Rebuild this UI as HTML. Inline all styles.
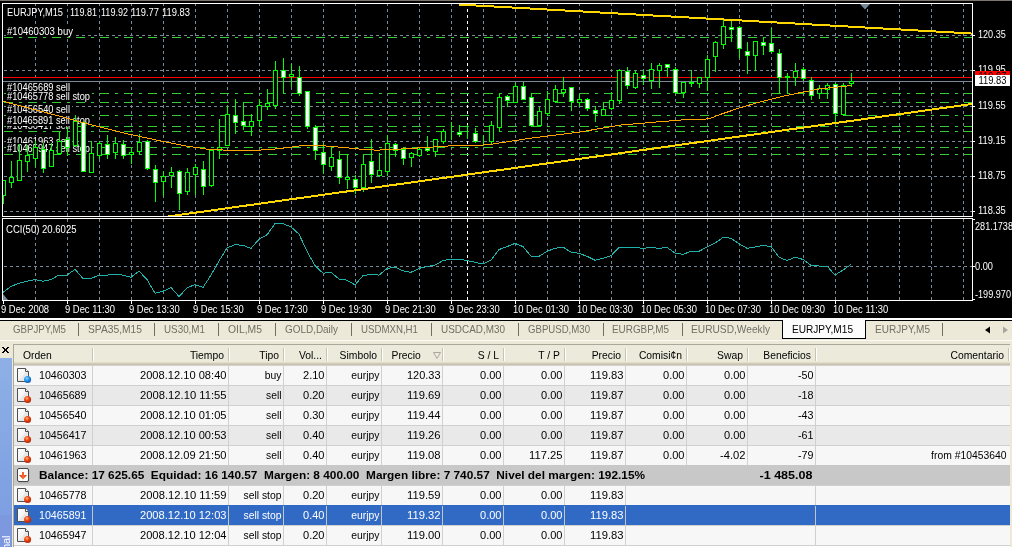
<!DOCTYPE html><html><head><meta charset="utf-8"><style>html,body{margin:0;padding:0;background:#000;overflow:hidden}</style></head><body><svg width="1012" height="547" viewBox="0 0 1012 547" style="display:block;will-change:transform;font-family:'Liberation Sans', sans-serif"><defs><clipPath id="cm"><rect x="3" y="4" width="969" height="212"/></clipPath><clipPath id="cc"><rect x="3" y="219" width="969" height="81"/></clipPath></defs><rect x="0" y="0" width="1012" height="321" fill="#000"/><rect x="0" y="0" width="1012" height="1" fill="#7d756b"/><rect x="0" y="318" width="1012" height="2" fill="#fff"/><g shape-rendering="crispEdges"><path d="M4 35.5H972" stroke="#778899" stroke-dasharray="3 3"/><path d="M4 70.5H972" stroke="#778899" stroke-dasharray="3 3"/><path d="M4 106.5H972" stroke="#778899" stroke-dasharray="3 3"/><path d="M4 141.5H972" stroke="#778899" stroke-dasharray="3 3"/><path d="M4 176.5H972" stroke="#778899" stroke-dasharray="3 3"/><path d="M4 211.5H972" stroke="#778899" stroke-dasharray="3 3"/><path d="M35.5 3V216" stroke="#778899" stroke-dasharray="3 3"/><path d="M67.5 3V216" stroke="#778899" stroke-dasharray="3 3"/><path d="M99.5 3V216" stroke="#778899" stroke-dasharray="3 3"/><path d="M131.5 3V216" stroke="#778899" stroke-dasharray="3 3"/><path d="M163.5 3V216" stroke="#778899" stroke-dasharray="3 3"/><path d="M195.5 3V216" stroke="#778899" stroke-dasharray="3 3"/><path d="M227.5 3V216" stroke="#778899" stroke-dasharray="3 3"/><path d="M259.5 3V216" stroke="#778899" stroke-dasharray="3 3"/><path d="M291.5 3V216" stroke="#778899" stroke-dasharray="3 3"/><path d="M323.5 3V216" stroke="#778899" stroke-dasharray="3 3"/><path d="M355.5 3V216" stroke="#778899" stroke-dasharray="3 3"/><path d="M387.5 3V216" stroke="#778899" stroke-dasharray="3 3"/><path d="M419.5 3V216" stroke="#778899" stroke-dasharray="3 3"/><path d="M451.5 3V216" stroke="#778899" stroke-dasharray="3 3"/><path d="M483.5 3V216" stroke="#778899" stroke-dasharray="3 3"/><path d="M515.5 3V216" stroke="#778899" stroke-dasharray="3 3"/><path d="M547.5 3V216" stroke="#778899" stroke-dasharray="3 3"/><path d="M579.5 3V216" stroke="#778899" stroke-dasharray="3 3"/><path d="M611.5 3V216" stroke="#778899" stroke-dasharray="3 3"/><path d="M643.5 3V216" stroke="#778899" stroke-dasharray="3 3"/><path d="M675.5 3V216" stroke="#778899" stroke-dasharray="3 3"/><path d="M707.5 3V216" stroke="#778899" stroke-dasharray="3 3"/><path d="M739.5 3V216" stroke="#778899" stroke-dasharray="3 3"/><path d="M771.5 3V216" stroke="#778899" stroke-dasharray="3 3"/><path d="M803.5 3V216" stroke="#778899" stroke-dasharray="3 3"/><path d="M835.5 3V216" stroke="#778899" stroke-dasharray="3 3"/><path d="M867.5 3V216" stroke="#778899" stroke-dasharray="3 3"/><path d="M899.5 3V216" stroke="#778899" stroke-dasharray="3 3"/><path d="M931.5 3V216" stroke="#778899" stroke-dasharray="3 3"/><path d="M963.5 3V216" stroke="#778899" stroke-dasharray="3 3"/><path d="M4 266.5H972" stroke="#778899" stroke-dasharray="3 3"/><path d="M35.5 219V300" stroke="#778899" stroke-dasharray="3 3"/><path d="M67.5 219V300" stroke="#778899" stroke-dasharray="3 3"/><path d="M99.5 219V300" stroke="#778899" stroke-dasharray="3 3"/><path d="M131.5 219V300" stroke="#778899" stroke-dasharray="3 3"/><path d="M163.5 219V300" stroke="#778899" stroke-dasharray="3 3"/><path d="M195.5 219V300" stroke="#778899" stroke-dasharray="3 3"/><path d="M227.5 219V300" stroke="#778899" stroke-dasharray="3 3"/><path d="M259.5 219V300" stroke="#778899" stroke-dasharray="3 3"/><path d="M291.5 219V300" stroke="#778899" stroke-dasharray="3 3"/><path d="M323.5 219V300" stroke="#778899" stroke-dasharray="3 3"/><path d="M355.5 219V300" stroke="#778899" stroke-dasharray="3 3"/><path d="M387.5 219V300" stroke="#778899" stroke-dasharray="3 3"/><path d="M419.5 219V300" stroke="#778899" stroke-dasharray="3 3"/><path d="M451.5 219V300" stroke="#778899" stroke-dasharray="3 3"/><path d="M483.5 219V300" stroke="#778899" stroke-dasharray="3 3"/><path d="M515.5 219V300" stroke="#778899" stroke-dasharray="3 3"/><path d="M547.5 219V300" stroke="#778899" stroke-dasharray="3 3"/><path d="M579.5 219V300" stroke="#778899" stroke-dasharray="3 3"/><path d="M611.5 219V300" stroke="#778899" stroke-dasharray="3 3"/><path d="M643.5 219V300" stroke="#778899" stroke-dasharray="3 3"/><path d="M675.5 219V300" stroke="#778899" stroke-dasharray="3 3"/><path d="M707.5 219V300" stroke="#778899" stroke-dasharray="3 3"/><path d="M739.5 219V300" stroke="#778899" stroke-dasharray="3 3"/><path d="M771.5 219V300" stroke="#778899" stroke-dasharray="3 3"/><path d="M803.5 219V300" stroke="#778899" stroke-dasharray="3 3"/><path d="M835.5 219V300" stroke="#778899" stroke-dasharray="3 3"/><path d="M867.5 219V300" stroke="#778899" stroke-dasharray="3 3"/><path d="M899.5 219V300" stroke="#778899" stroke-dasharray="3 3"/><path d="M931.5 219V300" stroke="#778899" stroke-dasharray="3 3"/><path d="M963.5 219V300" stroke="#778899" stroke-dasharray="3 3"/><path d="M467.5 3V216" stroke="#fff" stroke-dasharray="3 3"/><path d="M467.5 219V300" stroke="#fff" stroke-dasharray="3 3"/></g><g shape-rendering="crispEdges" clip-path="url(#cm)"><path d="M4 37.5H972" stroke="#32cd32" stroke-dasharray="9 6 3 6"/><path d="M4 93.5H972" stroke="#32cd32" stroke-dasharray="9 6 3 6"/><path d="M4 102.5H972" stroke="#32cd32" stroke-dasharray="9 6 3 6"/><path d="M4 115.5H972" stroke="#32cd32" stroke-dasharray="9 6 3 6"/><path d="M4 126.5H972" stroke="#32cd32" stroke-dasharray="9 6 3 6"/><path d="M4 131.5H972" stroke="#32cd32" stroke-dasharray="9 6 3 6"/><path d="M4 147.5H972" stroke="#32cd32" stroke-dasharray="9 6 3 6"/><path d="M4 154.5H972" stroke="#32cd32" stroke-dasharray="9 6 3 6"/><path d="M3 77.5H972" stroke="#ff0000"/><path d="M3 81.5H972" stroke="#778899"/></g><g clip-path="url(#cm)"><rect x="6" y="26" width="69" height="11" fill="#000" shape-rendering="crispEdges"/><text x="7" y="35" font-size="10" fill="#fff" textLength="66" lengthAdjust="spacingAndGlyphs">#10460303 buy</text><rect x="6" y="82" width="66" height="11" fill="#000" shape-rendering="crispEdges"/><text x="7" y="91" font-size="10" fill="#fff" textLength="63" lengthAdjust="spacingAndGlyphs">#10465689 sell</text><rect x="6" y="104" width="66" height="11" fill="#000" shape-rendering="crispEdges"/><text x="7" y="113" font-size="10" fill="#fff" textLength="63" lengthAdjust="spacingAndGlyphs">#10456540 sell</text><rect x="6" y="120" width="66" height="11" fill="#000" shape-rendering="crispEdges"/><text x="7" y="129" font-size="10" fill="#fff" textLength="63" lengthAdjust="spacingAndGlyphs">#10456417 sell</text><rect x="6" y="136" width="66" height="11" fill="#000" shape-rendering="crispEdges"/><text x="7" y="145" font-size="10" fill="#fff" textLength="63" lengthAdjust="spacingAndGlyphs">#10461963 sell</text><rect x="6" y="91" width="86" height="11" fill="#000" shape-rendering="crispEdges"/><text x="7" y="100" font-size="10" fill="#fff" textLength="83" lengthAdjust="spacingAndGlyphs">#10465778 sell stop</text><rect x="6" y="115" width="86" height="11" fill="#000" shape-rendering="crispEdges"/><text x="7" y="124" font-size="10" fill="#fff" textLength="83" lengthAdjust="spacingAndGlyphs">#10465891 sell stop</text><rect x="6" y="143" width="86" height="11" fill="#000" shape-rendering="crispEdges"/><text x="7" y="152" font-size="10" fill="#fff" textLength="83" lengthAdjust="spacingAndGlyphs">#10465947 sell stop</text></g><g shape-rendering="crispEdges" clip-path="url(#cm)" stroke="#00ff00" stroke-width="1"><path d="M3.5 180V204"/><rect x="1.5" y="180.5" width="4" height="15" fill="#000"/><path d="M11.5 161V188"/><rect x="9.5" y="177.5" width="4" height="5" fill="#000"/><path d="M19.5 144V181"/><rect x="17.5" y="160.5" width="4" height="20" fill="#000"/><path d="M27.5 145V172"/><rect x="25.5" y="155.5" width="4" height="6" fill="#000"/><path d="M35.5 141V167"/><rect x="33.5" y="147.5" width="4" height="11" fill="#000"/><path d="M43.5 143V173"/><rect x="41.5" y="149.5" width="4" height="19" fill="#fff"/><path d="M51.5 143V167"/><rect x="49.5" y="150.5" width="4" height="16" fill="#000"/><path d="M59.5 132V155"/><rect x="57.5" y="141.5" width="4" height="12" fill="#000"/><path d="M67.5 127V156"/><rect x="65.5" y="139.5" width="4" height="8" fill="#fff"/><path d="M75.5 115V147"/><rect x="73.5" y="121.5" width="4" height="24" fill="#000"/><path d="M83.5 121V172"/><rect x="81.5" y="122.5" width="4" height="49" fill="#fff"/><path d="M91.5 141V173"/><rect x="89.5" y="153.5" width="4" height="19" fill="#000"/><path d="M99.5 141V159"/><rect x="97.5" y="143.5" width="4" height="12" fill="#000"/><path d="M107.5 135V159"/><rect x="105.5" y="144.5" width="4" height="10" fill="#fff"/><path d="M115.5 137V159"/><rect x="113.5" y="143.5" width="4" height="9" fill="#000"/><path d="M123.5 140V159"/><rect x="121.5" y="144.5" width="4" height="11" fill="#fff"/><path d="M131.5 148V164"/><rect x="129.5" y="152.5" width="4" height="2" fill="#000"/><path d="M139.5 134V155"/><rect x="137.5" y="142.5" width="4" height="9" fill="#000"/><path d="M147.5 140V170"/><rect x="145.5" y="141.5" width="4" height="27" fill="#fff"/><path d="M155.5 165V202"/><rect x="153.5" y="169.5" width="4" height="13" fill="#fff"/><path d="M163.5 171V196"/><rect x="161.5" y="176.5" width="4" height="5" fill="#000"/><path d="M171.5 167V188"/><rect x="169.5" y="172.5" width="4" height="3" fill="#000"/><path d="M179.5 170V210"/><rect x="177.5" y="171.5" width="4" height="22" fill="#fff"/><path d="M187.5 168V195"/><rect x="185.5" y="172.5" width="4" height="19" fill="#000"/><path d="M195.5 164V195"/><rect x="193.5" y="167.5" width="4" height="7" fill="#000"/><path d="M203.5 161V195"/><rect x="201.5" y="169.5" width="4" height="17" fill="#fff"/><path d="M211.5 149V187"/><rect x="209.5" y="150.5" width="4" height="35" fill="#000"/><path d="M219.5 119V159"/><rect x="217.5" y="147.5" width="4" height="3" fill="#000"/><path d="M227.5 106V146"/><rect x="225.5" y="114.5" width="4" height="31" fill="#000"/><path d="M235.5 99V134"/><rect x="233.5" y="115.5" width="4" height="7" fill="#fff"/><path d="M243.5 102V130"/><rect x="241.5" y="121.5" width="4" height="4" fill="#fff"/><path d="M251.5 114V136"/><rect x="249.5" y="121.5" width="4" height="5" fill="#000"/><path d="M259.5 99V127"/><rect x="257.5" y="105.5" width="4" height="15" fill="#000"/><path d="M267.5 89V110"/><rect x="265.5" y="103.5" width="4" height="3" fill="#000"/><path d="M275.5 61V109"/><rect x="273.5" y="70.5" width="4" height="35" fill="#000"/><path d="M283.5 58V94"/><rect x="281.5" y="70.5" width="4" height="7" fill="#fff"/><path d="M291.5 64V87"/><rect x="289.5" y="74.5" width="4" height="2" fill="#000"/><path d="M299.5 66V96"/><rect x="297.5" y="77.5" width="4" height="16" fill="#fff"/><path d="M307.5 91V129"/><rect x="305.5" y="91.5" width="4" height="35" fill="#fff"/><path d="M315.5 125V160"/><rect x="313.5" y="127.5" width="4" height="23" fill="#fff"/><path d="M323.5 143V174"/><rect x="321.5" y="152.5" width="4" height="12" fill="#fff"/><path d="M331.5 147V171"/><rect x="329.5" y="157.5" width="4" height="9" fill="#000"/><path d="M339.5 151V184"/><rect x="337.5" y="159.5" width="4" height="18" fill="#fff"/><path d="M347.5 154V189"/><rect x="345.5" y="177.5" width="4" height="2" fill="#000"/><path d="M355.5 175V194"/><rect x="353.5" y="179.5" width="4" height="8" fill="#fff"/><path d="M363.5 154V192"/><rect x="361.5" y="164.5" width="4" height="23" fill="#000"/><path d="M371.5 139V183"/><rect x="369.5" y="161.5" width="4" height="13" fill="#fff"/><path d="M379.5 153V177"/><rect x="377.5" y="170.5" width="4" height="5" fill="#000"/><path d="M387.5 135V176"/><rect x="385.5" y="143.5" width="4" height="28" fill="#000"/><path d="M395.5 143V157"/><rect x="393.5" y="144.5" width="4" height="6" fill="#fff"/><path d="M403.5 148V165"/><rect x="401.5" y="149.5" width="4" height="9" fill="#fff"/><path d="M411.5 152V167"/><rect x="409.5" y="153.5" width="4" height="4" fill="#000"/><path d="M419.5 148V157"/><rect x="417.5" y="149.5" width="4" height="6" fill="#000"/><path d="M427.5 136V152"/><rect x="425.5" y="148.5" width="4" height="2" fill="#fff"/><path d="M435.5 139V157"/><rect x="433.5" y="139.5" width="4" height="12" fill="#000"/><path d="M443.5 129V144"/><rect x="441.5" y="131.5" width="4" height="10" fill="#000"/><path d="M451.5 122V140"/><rect x="449.5" y="131.5" width="4" height="0" fill="#000"/><path d="M459.5 125V137"/><rect x="457.5" y="132.5" width="4" height="2" fill="#fff"/><path d="M467.5 125V139"/><rect x="465.5" y="131.5" width="4" height="0" fill="#000"/><path d="M475.5 128V143"/><rect x="473.5" y="133.5" width="4" height="8" fill="#fff"/><path d="M483.5 135V146"/><rect x="481.5" y="143.5" width="4" height="0" fill="#000"/><path d="M491.5 121V145"/><rect x="489.5" y="125.5" width="4" height="16" fill="#000"/><path d="M499.5 93V132"/><rect x="497.5" y="97.5" width="4" height="30" fill="#000"/><path d="M507.5 95V107"/><rect x="505.5" y="96.5" width="4" height="4" fill="#fff"/><path d="M515.5 83V103"/><rect x="513.5" y="86.5" width="4" height="16" fill="#000"/><path d="M523.5 82V100"/><rect x="521.5" y="86.5" width="4" height="13" fill="#fff"/><path d="M531.5 93V127"/><rect x="529.5" y="97.5" width="4" height="28" fill="#fff"/><path d="M539.5 107V127"/><rect x="537.5" y="111.5" width="4" height="14" fill="#000"/><path d="M547.5 91V116"/><rect x="545.5" y="99.5" width="4" height="14" fill="#000"/><path d="M555.5 85V103"/><rect x="553.5" y="89.5" width="4" height="12" fill="#000"/><path d="M563.5 77V97"/><rect x="561.5" y="89.5" width="4" height="3" fill="#000"/><path d="M571.5 87V111"/><rect x="569.5" y="87.5" width="4" height="14" fill="#fff"/><path d="M579.5 94V107"/><rect x="577.5" y="99.5" width="4" height="3" fill="#000"/><path d="M587.5 98V111"/><rect x="585.5" y="99.5" width="4" height="9" fill="#fff"/><path d="M595.5 106V122"/><rect x="593.5" y="110.5" width="4" height="3" fill="#fff"/><path d="M603.5 102V116"/><rect x="601.5" y="109.5" width="4" height="6" fill="#000"/><path d="M611.5 92V110"/><rect x="609.5" y="100.5" width="4" height="8" fill="#000"/><path d="M619.5 69V104"/><rect x="617.5" y="70.5" width="4" height="30" fill="#000"/><path d="M627.5 67V89"/><rect x="625.5" y="71.5" width="4" height="14" fill="#fff"/><path d="M635.5 70V89"/><rect x="633.5" y="73.5" width="4" height="14" fill="#000"/><path d="M643.5 70V85"/><rect x="641.5" y="75.5" width="4" height="3" fill="#fff"/><path d="M651.5 63V89"/><rect x="649.5" y="69.5" width="4" height="11" fill="#000"/><path d="M659.5 63V88"/><rect x="657.5" y="65.5" width="4" height="5" fill="#000"/><path d="M667.5 64V77"/><rect x="665.5" y="64.5" width="4" height="3" fill="#fff"/><path d="M675.5 67V94"/><rect x="673.5" y="69.5" width="4" height="23" fill="#fff"/><path d="M683.5 82V98"/><rect x="681.5" y="82.5" width="4" height="10" fill="#000"/><path d="M691.5 70V87"/><rect x="689.5" y="82.5" width="4" height="1" fill="#000"/><path d="M699.5 77V88"/><rect x="697.5" y="77.5" width="4" height="6" fill="#000"/><path d="M707.5 55V91"/><rect x="705.5" y="59.5" width="4" height="18" fill="#000"/><path d="M715.5 41V72"/><rect x="713.5" y="42.5" width="4" height="14" fill="#000"/><path d="M723.5 20V49"/><rect x="721.5" y="26.5" width="4" height="18" fill="#000"/><path d="M731.5 21V42"/><rect x="729.5" y="27.5" width="4" height="2" fill="#fff"/><path d="M739.5 26V58"/><rect x="737.5" y="27.5" width="4" height="21" fill="#fff"/><path d="M747.5 42V74"/><rect x="745.5" y="51.5" width="4" height="4" fill="#fff"/><path d="M755.5 41V71"/><rect x="753.5" y="41.5" width="4" height="14" fill="#000"/><path d="M763.5 37V55"/><rect x="761.5" y="42.5" width="4" height="3" fill="#fff"/><path d="M771.5 28V53"/><rect x="769.5" y="43.5" width="4" height="8" fill="#fff"/><path d="M779.5 49V94"/><rect x="777.5" y="53.5" width="4" height="24" fill="#fff"/><path d="M787.5 73V94"/><rect x="785.5" y="76.5" width="4" height="1" fill="#000"/><path d="M795.5 63V86"/><rect x="793.5" y="71.5" width="4" height="6" fill="#000"/><path d="M803.5 67V81"/><rect x="801.5" y="69.5" width="4" height="9" fill="#fff"/><path d="M811.5 77V100"/><rect x="809.5" y="80.5" width="4" height="15" fill="#fff"/><path d="M819.5 85V99"/><rect x="817.5" y="88.5" width="4" height="5" fill="#000"/><path d="M827.5 83V99"/><rect x="825.5" y="85.5" width="4" height="4" fill="#000"/><path d="M835.5 83V123"/><rect x="833.5" y="84.5" width="4" height="29" fill="#fff"/><path d="M843.5 83V116"/><rect x="841.5" y="85.5" width="4" height="29" fill="#000"/><path d="M851.5 73V87"/><rect x="849.5" y="81.5" width="4" height="2" fill="#000"/></g><g clip-path="url(#cm)" shape-rendering="crispEdges"><polyline points="3,101.3 32,108.9 63,117.1 95,125.8 127,133.7 160,140.8 186,146 209,149.4 232,150.4 255,150.4 278,148.8 301,145.8 324,145.8 346,147.7 362,149.3 377,150.2 393,149.3 409,148.7 425,147.4 441,146.6 456,145.3 472,145.8 490,144.5 530,138.2 580,132 620,125.1 660,121.7 685,119.7 700,119.8 710,118.5 720,114.5 740,107.8 760,101.9 780,96.9 800,92.7 820,88.8 840,86.8 851,85.5" fill="none" stroke="#ffa500" stroke-width="1"/></g><g clip-path="url(#cm)" shape-rendering="crispEdges"><path d="M459 4.52L973 33.6" stroke="#ffd700" stroke-width="2" fill="none"/><path d="M168 216.5L973 103.8" stroke="#ffd700" stroke-width="2" fill="none"/></g><path d="M860 4H870L865 9.5Z" fill="#778899"/><g clip-path="url(#cc)" shape-rendering="crispEdges"><polyline points="3,292.4 11,286.5 19,283.2 27,281.2 35,279.5 43,281.2 51,279.5 59,275.1 67,275.1 75,269.4 83,278.5 91,278.5 99,275.1 107,275.1 115,274.3 123,275.1 131,277.3 139,271.1 147,279.5 155,293.3 163,291.3 171,287.4 179,296.6 187,287.9 195,284.5 203,287.4 211,275.1 219,261 227,248 235,244.6 243,245.4 251,248.4 259,239.2 267,234.8 275,223.6 283,223.6 291,226.9 299,234.1 307,251.3 315,265.6 323,273.2 331,272.3 339,279 347,280.2 355,284.9 363,275.6 371,274.3 379,275.1 387,268.6 395,266.9 403,270.9 411,272.3 419,268.4 427,266.4 435,265.2 443,260.5 451,259.3 459,259.3 467,260.5 475,262.2 483,264.1 491,260.2 499,249.6 507,246.6 515,243.4 523,246.6 531,256.3 539,256.3 547,251.3 555,248.3 563,247.1 571,252.1 579,253.3 587,256.3 595,260.2 603,258.3 611,255.8 619,247.4 627,247.4 635,247.4 643,248.3 651,247.4 659,248.3 667,247.4 675,253 683,254.3 691,251.3 699,251.3 707,247.1 715,243.2 723,237.5 731,238.2 739,243.7 747,248.3 755,247.1 763,245.4 771,246.6 779,257.2 787,260.5 795,257.3 803,259.4 811,265.5 819,266 827,266 835,275.1 843,270.1 851,264.4" fill="none" stroke="#20b2aa" stroke-width="1"/></g><path d="M3 294L3 300H8Z" fill="#778899"/><g shape-rendering="crispEdges" fill="none" stroke="#fff"><rect x="2.5" y="3.5" width="970" height="213"/><rect x="2.5" y="218.5" width="970" height="82"/></g><text x="7" y="16" font-size="10" fill="#fff" textLength="56" lengthAdjust="spacingAndGlyphs">EURJPY,M15</text><text x="70" y="16" font-size="10" fill="#fff" textLength="27" lengthAdjust="spacingAndGlyphs">119.81</text><text x="101" y="16" font-size="10" fill="#fff" textLength="27" lengthAdjust="spacingAndGlyphs">119.92</text><text x="131" y="16" font-size="10" fill="#fff" textLength="28" lengthAdjust="spacingAndGlyphs">119.77</text><text x="162" y="16" font-size="10" fill="#fff" textLength="28" lengthAdjust="spacingAndGlyphs">119.83</text><text x="6" y="233" font-size="10" fill="#fff" textLength="70.5" lengthAdjust="spacingAndGlyphs">CCI(50) 20.6025</text><g shape-rendering="crispEdges" stroke="#fff"><path d="M973 35.5H975"/><path d="M973 70.5H975"/><path d="M973 106.5H975"/><path d="M973 141.5H975"/><path d="M973 176.5H975"/><path d="M973 211.5H975"/><path d="M973 219.5H975"/><path d="M973 266.5H975"/><path d="M973 299.5H975"/></g><text x="978" y="38" font-size="10" fill="#fff" textLength="27.8" lengthAdjust="spacingAndGlyphs">120.35</text><text x="978" y="73" font-size="10" fill="#fff" textLength="27.8" lengthAdjust="spacingAndGlyphs">119.95</text><text x="978" y="109" font-size="10" fill="#fff" textLength="27.8" lengthAdjust="spacingAndGlyphs">119.55</text><text x="978" y="144" font-size="10" fill="#fff" textLength="27.8" lengthAdjust="spacingAndGlyphs">119.15</text><text x="978" y="179" font-size="10" fill="#fff" textLength="27.8" lengthAdjust="spacingAndGlyphs">118.75</text><text x="978" y="214" font-size="10" fill="#fff" textLength="27.8" lengthAdjust="spacingAndGlyphs">118.35</text><rect x="975" y="71" width="35" height="11" fill="#ff0000"/><text x="978.5" y="80" font-size="10" fill="#000" textLength="28" lengthAdjust="spacingAndGlyphs">119.87</text><rect x="975" y="75" width="35" height="11" fill="#fff"/><text x="978.5" y="84" font-size="10" fill="#000" textLength="28" lengthAdjust="spacingAndGlyphs">119.83</text><text x="975" y="230" font-size="10" fill="#fff" textLength="38" lengthAdjust="spacingAndGlyphs">281.1738</text><text x="975" y="270" font-size="10" fill="#fff" textLength="18" lengthAdjust="spacingAndGlyphs">0.00</text><text x="975" y="298" font-size="10" fill="#fff" textLength="36" lengthAdjust="spacingAndGlyphs">-199.970</text><g shape-rendering="crispEdges" stroke="#fff"><path d="M3.5 301V304"/><path d="M67.5 301V304"/><path d="M131.5 301V304"/><path d="M195.5 301V304"/><path d="M259.5 301V304"/><path d="M323.5 301V304"/><path d="M387.5 301V304"/><path d="M451.5 301V304"/><path d="M515.5 301V304"/><path d="M579.5 301V304"/><path d="M643.5 301V304"/><path d="M707.5 301V304"/><path d="M771.5 301V304"/><path d="M835.5 301V304"/></g><text x="1" y="313" font-size="10" fill="#fff" textLength="48.1" lengthAdjust="spacingAndGlyphs">9 Dec 2008</text><text x="65" y="313" font-size="10" fill="#fff" textLength="50.0" lengthAdjust="spacingAndGlyphs">9 Dec 11:30</text><text x="129" y="313" font-size="10" fill="#fff" textLength="50.7" lengthAdjust="spacingAndGlyphs">9 Dec 13:30</text><text x="193" y="313" font-size="10" fill="#fff" textLength="50.7" lengthAdjust="spacingAndGlyphs">9 Dec 15:30</text><text x="257" y="313" font-size="10" fill="#fff" textLength="50.7" lengthAdjust="spacingAndGlyphs">9 Dec 17:30</text><text x="321" y="313" font-size="10" fill="#fff" textLength="50.7" lengthAdjust="spacingAndGlyphs">9 Dec 19:30</text><text x="385" y="313" font-size="10" fill="#fff" textLength="50.7" lengthAdjust="spacingAndGlyphs">9 Dec 21:30</text><text x="449" y="313" font-size="10" fill="#fff" textLength="50.7" lengthAdjust="spacingAndGlyphs">9 Dec 23:30</text><text x="513" y="313" font-size="10" fill="#fff" textLength="55.9" lengthAdjust="spacingAndGlyphs">10 Dec 01:30</text><text x="577" y="313" font-size="10" fill="#fff" textLength="55.9" lengthAdjust="spacingAndGlyphs">10 Dec 03:30</text><text x="641" y="313" font-size="10" fill="#fff" textLength="55.9" lengthAdjust="spacingAndGlyphs">10 Dec 05:30</text><text x="705" y="313" font-size="10" fill="#fff" textLength="55.9" lengthAdjust="spacingAndGlyphs">10 Dec 07:30</text><text x="769" y="313" font-size="10" fill="#fff" textLength="55.9" lengthAdjust="spacingAndGlyphs">10 Dec 09:30</text><text x="833" y="313" font-size="10" fill="#fff" textLength="55.2" lengthAdjust="spacingAndGlyphs">10 Dec 11:30</text><rect x="0" y="321" width="1012" height="226" fill="#ece9d8"/><rect x="782" y="318" width="84" height="20" fill="#fcfcfc"/><path d="M782.5 320V338.5H865.5V320" fill="none" stroke="#000" shape-rendering="crispEdges"/><text x="13" y="333" font-size="11" fill="#716f64" textLength="53" lengthAdjust="spacingAndGlyphs">GBPJPY,M5</text><text x="88" y="333" font-size="11" fill="#716f64" textLength="54" lengthAdjust="spacingAndGlyphs">SPA35,M15</text><text x="164" y="333" font-size="11" fill="#716f64" textLength="41" lengthAdjust="spacingAndGlyphs">US30,M1</text><text x="228" y="333" font-size="11" fill="#716f64" textLength="34" lengthAdjust="spacingAndGlyphs">OIL,M5</text><text x="285" y="333" font-size="11" fill="#716f64" textLength="53" lengthAdjust="spacingAndGlyphs">GOLD,Daily</text><text x="361" y="333" font-size="11" fill="#716f64" textLength="57" lengthAdjust="spacingAndGlyphs">USDMXN,H1</text><text x="441" y="333" font-size="11" fill="#716f64" textLength="64" lengthAdjust="spacingAndGlyphs">USDCAD,M30</text><text x="528" y="333" font-size="11" fill="#716f64" textLength="62" lengthAdjust="spacingAndGlyphs">GBPUSD,M30</text><text x="612" y="333" font-size="11" fill="#716f64" textLength="57" lengthAdjust="spacingAndGlyphs">EURGBP,M5</text><text x="691" y="333" font-size="11" fill="#716f64" textLength="79" lengthAdjust="spacingAndGlyphs">EURUSD,Weekly</text><text x="792" y="333" font-size="11" fill="#000" textLength="61" lengthAdjust="spacingAndGlyphs">EURJPY,M15</text><text x="875" y="333" font-size="11" fill="#716f64" textLength="55" lengthAdjust="spacingAndGlyphs">EURJPY,M5</text><g shape-rendering="crispEdges" stroke="#716f64"><path d="M78.5 323V336"/><path d="M154.5 323V336"/><path d="M218.5 323V336"/><path d="M275.5 323V336"/><path d="M351.5 323V336"/><path d="M431.5 323V336"/><path d="M518.5 323V336"/><path d="M603.5 323V336"/><path d="M682.5 323V336"/><path d="M942.5 323V336"/></g><path d="M985 330L990 326.5V333.5Z" fill="#000"/><path d="M1008 330L1003 326.5V333.5Z" fill="#a7a69c"/><rect x="0" y="340" width="1012" height="1" fill="#fafaf6"/><g fill="#000" shape-rendering="crispEdges"><rect x="2" y="347" width="2" height="1"/><rect x="7" y="347" width="2" height="1"/><rect x="3" y="348" width="2" height="1"/><rect x="6" y="348" width="2" height="1"/><rect x="4" y="349" width="3" height="2"/><rect x="3" y="351" width="2" height="1"/><rect x="6" y="351" width="2" height="1"/><rect x="2" y="352" width="2" height="1"/><rect x="7" y="352" width="2" height="1"/></g><defs><linearGradient id="sb" x1="0" y1="0" x2="0" y2="1"><stop offset="0" stop-color="#8eb0e6"/><stop offset="1" stop-color="#7a9be0"/></linearGradient></defs><rect x="0" y="358" width="12" height="189" fill="url(#sb)"/><defs><linearGradient id="docg" x1="0" y1="0" x2="1" y2="1"><stop offset="0" stop-color="#ffffff"/><stop offset="0.5" stop-color="#f4f4f4"/><stop offset="0.55" stop-color="#e6e6e6"/><stop offset="1" stop-color="#f2f2f2"/></linearGradient><radialGradient id="blu" cx="0.4" cy="0.35" r="0.65"><stop offset="0" stop-color="#9ad8ff"/><stop offset="0.45" stop-color="#2a9af0"/><stop offset="1" stop-color="#0b5fb0"/></radialGradient><radialGradient id="red" cx="0.4" cy="0.35" r="0.65"><stop offset="0" stop-color="#ffb48a"/><stop offset="0.45" stop-color="#f04a12"/><stop offset="1" stop-color="#b02808"/></radialGradient><linearGradient id="arr" x1="0" y1="0" x2="1" y2="0"><stop offset="0" stop-color="#c83008"/><stop offset="0.5" stop-color="#ff6a30"/><stop offset="1" stop-color="#c83008"/></linearGradient></defs><rect x="0" y="515" width="12" height="32" fill="#7e98e0"/><text transform="translate(10,577) rotate(-90)" font-size="11" fill="#fff">Terminal</text><rect x="13" y="344" width="997" height="203" fill="#fff" shape-rendering="crispEdges"/><rect x="13" y="344" width="997" height="1" fill="#aca899"/><rect x="13" y="344" width="1" height="203" fill="#aca899"/><rect x="14" y="345" width="996" height="17" fill="#ebeadb"/><rect x="14" y="362" width="996" height="1" fill="#e2dcc9"/><rect x="14" y="363" width="996" height="1" fill="#d2cdb9"/><rect x="14" y="364" width="996" height="1" fill="#c6c3b6"/><rect x="14" y="365" width="996" height="1" fill="#d4d2ca"/><g shape-rendering="crispEdges"><rect x="92" y="348" width="1" height="13" fill="#c7c5b2"/><rect x="93" y="348" width="1" height="13" fill="#fff"/><rect x="228" y="348" width="1" height="13" fill="#c7c5b2"/><rect x="229" y="348" width="1" height="13" fill="#fff"/><rect x="283" y="348" width="1" height="13" fill="#c7c5b2"/><rect x="284" y="348" width="1" height="13" fill="#fff"/><rect x="326" y="348" width="1" height="13" fill="#c7c5b2"/><rect x="327" y="348" width="1" height="13" fill="#fff"/><rect x="381" y="348" width="1" height="13" fill="#c7c5b2"/><rect x="382" y="348" width="1" height="13" fill="#fff"/><rect x="442" y="348" width="1" height="13" fill="#c7c5b2"/><rect x="443" y="348" width="1" height="13" fill="#fff"/><rect x="503" y="348" width="1" height="13" fill="#c7c5b2"/><rect x="504" y="348" width="1" height="13" fill="#fff"/><rect x="564" y="348" width="1" height="13" fill="#c7c5b2"/><rect x="565" y="348" width="1" height="13" fill="#fff"/><rect x="625" y="348" width="1" height="13" fill="#c7c5b2"/><rect x="626" y="348" width="1" height="13" fill="#fff"/><rect x="686" y="348" width="1" height="13" fill="#c7c5b2"/><rect x="687" y="348" width="1" height="13" fill="#fff"/><rect x="747" y="348" width="1" height="13" fill="#c7c5b2"/><rect x="748" y="348" width="1" height="13" fill="#fff"/><rect x="815" y="348" width="1" height="13" fill="#c7c5b2"/><rect x="816" y="348" width="1" height="13" fill="#fff"/><rect x="1008" y="348" width="1" height="13" fill="#c7c5b2"/><rect x="1009" y="348" width="1" height="13" fill="#fff"/></g><text x="23" y="359" font-size="11" fill="#000" textLength="28.8" lengthAdjust="spacingAndGlyphs">Orden</text><text x="391.5" y="359" font-size="11" fill="#000" textLength="29.3" lengthAdjust="spacingAndGlyphs">Precio</text><path d="M433.5 352.5H440.5L437 358.5Z" fill="none" stroke="#aca899" stroke-width="1"/><text x="224" y="359" font-size="11" fill="#000" text-anchor="end" textLength="34.1" lengthAdjust="spacingAndGlyphs">Tiempo</text><text x="279" y="359" font-size="11" fill="#000" text-anchor="end" textLength="19.7" lengthAdjust="spacingAndGlyphs">Tipo</text><text x="322" y="359" font-size="11" fill="#000" text-anchor="end" textLength="23.0" lengthAdjust="spacingAndGlyphs">Vol...</text><text x="377" y="359" font-size="11" fill="#000" text-anchor="end" textLength="37.4" lengthAdjust="spacingAndGlyphs">Simbolo</text><text x="499" y="359" font-size="11" fill="#000" text-anchor="end" textLength="21.3" lengthAdjust="spacingAndGlyphs">S / L</text><text x="560" y="359" font-size="11" fill="#000" text-anchor="end" textLength="21.7" lengthAdjust="spacingAndGlyphs">T / P</text><text x="621" y="359" font-size="11" fill="#000" text-anchor="end" textLength="29.3" lengthAdjust="spacingAndGlyphs">Precio</text><text x="682" y="359" font-size="11" fill="#000" text-anchor="end" textLength="43.1" lengthAdjust="spacingAndGlyphs">Comisi¢n</text><text x="743" y="359" font-size="11" fill="#000" text-anchor="end" textLength="25.9" lengthAdjust="spacingAndGlyphs">Swap</text><text x="811" y="359" font-size="11" fill="#000" text-anchor="end" textLength="47.7" lengthAdjust="spacingAndGlyphs">Beneficios</text><text x="1004" y="359" font-size="11" fill="#000" text-anchor="end" textLength="53.5" lengthAdjust="spacingAndGlyphs">Comentario</text><rect x="14" y="366" width="996" height="19" fill="#f7f7f7"/><g shape-rendering="crispEdges"><rect x="92" y="366" width="1" height="19" fill="#d0d0d0"/><rect x="228" y="366" width="1" height="19" fill="#d0d0d0"/><rect x="283" y="366" width="1" height="19" fill="#d0d0d0"/><rect x="326" y="366" width="1" height="19" fill="#d0d0d0"/><rect x="381" y="366" width="1" height="19" fill="#d0d0d0"/><rect x="442" y="366" width="1" height="19" fill="#d0d0d0"/><rect x="503" y="366" width="1" height="19" fill="#d0d0d0"/><rect x="564" y="366" width="1" height="19" fill="#d0d0d0"/><rect x="625" y="366" width="1" height="19" fill="#d0d0d0"/><rect x="686" y="366" width="1" height="19" fill="#d0d0d0"/><rect x="747" y="366" width="1" height="19" fill="#d0d0d0"/><rect x="815" y="366" width="1" height="19" fill="#d0d0d0"/></g><path d="M17.5 368.5H25.5L28.5 371.5V381.5H17.5Z" fill="url(#docg)" stroke="#505050" stroke-width="1" stroke-linejoin="round"/><path d="M25.5 368.5V371.5H28.5" fill="#fff" stroke="#505050" stroke-width="1"/><circle cx="27.6" cy="379.4" r="3.5" fill="url(#blu)"/><text x="39" y="379" font-size="11" fill="#000" textLength="47.5" lengthAdjust="spacingAndGlyphs">10460303</text><text x="226.5" y="379" font-size="11" fill="#000" text-anchor="end" textLength="86.5" lengthAdjust="spacingAndGlyphs">2008.12.10 08:40</text><text x="281.5" y="379" font-size="11" fill="#000" text-anchor="end" textLength="16.7" lengthAdjust="spacingAndGlyphs">buy</text><text x="324.5" y="379" font-size="11" fill="#000" text-anchor="end" textLength="21.5" lengthAdjust="spacingAndGlyphs">2.10</text><text x="379.5" y="379" font-size="11" fill="#000" text-anchor="end" textLength="28.2" lengthAdjust="spacingAndGlyphs">eurjpy</text><text x="440.5" y="379" font-size="11" fill="#000" text-anchor="end" textLength="33.5" lengthAdjust="spacingAndGlyphs">120.33</text><text x="501.5" y="379" font-size="11" fill="#000" text-anchor="end" textLength="21.5" lengthAdjust="spacingAndGlyphs">0.00</text><text x="562.5" y="379" font-size="11" fill="#000" text-anchor="end" textLength="21.5" lengthAdjust="spacingAndGlyphs">0.00</text><text x="623.5" y="379" font-size="11" fill="#000" text-anchor="end" textLength="33.5" lengthAdjust="spacingAndGlyphs">119.83</text><text x="684.5" y="379" font-size="11" fill="#000" text-anchor="end" textLength="21.5" lengthAdjust="spacingAndGlyphs">0.00</text><text x="745.5" y="379" font-size="11" fill="#000" text-anchor="end" textLength="21.5" lengthAdjust="spacingAndGlyphs">0.00</text><text x="813.5" y="379" font-size="11" fill="#000" text-anchor="end" textLength="15.5" lengthAdjust="spacingAndGlyphs">-50</text><rect x="14" y="385" width="996" height="1" fill="#d0d0d0"/><rect x="14" y="386" width="996" height="19" fill="#e9e9e9"/><g shape-rendering="crispEdges"><rect x="92" y="386" width="1" height="19" fill="#d0d0d0"/><rect x="228" y="386" width="1" height="19" fill="#d0d0d0"/><rect x="283" y="386" width="1" height="19" fill="#d0d0d0"/><rect x="326" y="386" width="1" height="19" fill="#d0d0d0"/><rect x="381" y="386" width="1" height="19" fill="#d0d0d0"/><rect x="442" y="386" width="1" height="19" fill="#d0d0d0"/><rect x="503" y="386" width="1" height="19" fill="#d0d0d0"/><rect x="564" y="386" width="1" height="19" fill="#d0d0d0"/><rect x="625" y="386" width="1" height="19" fill="#d0d0d0"/><rect x="686" y="386" width="1" height="19" fill="#d0d0d0"/><rect x="747" y="386" width="1" height="19" fill="#d0d0d0"/><rect x="815" y="386" width="1" height="19" fill="#d0d0d0"/></g><path d="M17.5 388.5H25.5L28.5 391.5V401.5H17.5Z" fill="url(#docg)" stroke="#505050" stroke-width="1" stroke-linejoin="round"/><path d="M25.5 388.5V391.5H28.5" fill="#fff" stroke="#505050" stroke-width="1"/><circle cx="27.6" cy="399.4" r="3.5" fill="url(#red)"/><text x="39" y="399" font-size="11" fill="#000" textLength="47.5" lengthAdjust="spacingAndGlyphs">10465689</text><text x="226.5" y="399" font-size="11" fill="#000" text-anchor="end" textLength="86.5" lengthAdjust="spacingAndGlyphs">2008.12.10 11:55</text><text x="281.5" y="399" font-size="11" fill="#000" text-anchor="end" textLength="15.5" lengthAdjust="spacingAndGlyphs">sell</text><text x="324.5" y="399" font-size="11" fill="#000" text-anchor="end" textLength="21.5" lengthAdjust="spacingAndGlyphs">0.20</text><text x="379.5" y="399" font-size="11" fill="#000" text-anchor="end" textLength="28.2" lengthAdjust="spacingAndGlyphs">eurjpy</text><text x="440.5" y="399" font-size="11" fill="#000" text-anchor="end" textLength="33.5" lengthAdjust="spacingAndGlyphs">119.69</text><text x="501.5" y="399" font-size="11" fill="#000" text-anchor="end" textLength="21.5" lengthAdjust="spacingAndGlyphs">0.00</text><text x="562.5" y="399" font-size="11" fill="#000" text-anchor="end" textLength="21.5" lengthAdjust="spacingAndGlyphs">0.00</text><text x="623.5" y="399" font-size="11" fill="#000" text-anchor="end" textLength="33.5" lengthAdjust="spacingAndGlyphs">119.87</text><text x="684.5" y="399" font-size="11" fill="#000" text-anchor="end" textLength="21.5" lengthAdjust="spacingAndGlyphs">0.00</text><text x="745.5" y="399" font-size="11" fill="#000" text-anchor="end" textLength="21.5" lengthAdjust="spacingAndGlyphs">0.00</text><text x="813.5" y="399" font-size="11" fill="#000" text-anchor="end" textLength="15.5" lengthAdjust="spacingAndGlyphs">-18</text><rect x="14" y="405" width="996" height="1" fill="#d0d0d0"/><rect x="14" y="406" width="996" height="19" fill="#f7f7f7"/><g shape-rendering="crispEdges"><rect x="92" y="406" width="1" height="19" fill="#d0d0d0"/><rect x="228" y="406" width="1" height="19" fill="#d0d0d0"/><rect x="283" y="406" width="1" height="19" fill="#d0d0d0"/><rect x="326" y="406" width="1" height="19" fill="#d0d0d0"/><rect x="381" y="406" width="1" height="19" fill="#d0d0d0"/><rect x="442" y="406" width="1" height="19" fill="#d0d0d0"/><rect x="503" y="406" width="1" height="19" fill="#d0d0d0"/><rect x="564" y="406" width="1" height="19" fill="#d0d0d0"/><rect x="625" y="406" width="1" height="19" fill="#d0d0d0"/><rect x="686" y="406" width="1" height="19" fill="#d0d0d0"/><rect x="747" y="406" width="1" height="19" fill="#d0d0d0"/><rect x="815" y="406" width="1" height="19" fill="#d0d0d0"/></g><path d="M17.5 408.5H25.5L28.5 411.5V421.5H17.5Z" fill="url(#docg)" stroke="#505050" stroke-width="1" stroke-linejoin="round"/><path d="M25.5 408.5V411.5H28.5" fill="#fff" stroke="#505050" stroke-width="1"/><circle cx="27.6" cy="419.4" r="3.5" fill="url(#red)"/><text x="39" y="419" font-size="11" fill="#000" textLength="47.5" lengthAdjust="spacingAndGlyphs">10456540</text><text x="226.5" y="419" font-size="11" fill="#000" text-anchor="end" textLength="86.5" lengthAdjust="spacingAndGlyphs">2008.12.10 01:05</text><text x="281.5" y="419" font-size="11" fill="#000" text-anchor="end" textLength="15.5" lengthAdjust="spacingAndGlyphs">sell</text><text x="324.5" y="419" font-size="11" fill="#000" text-anchor="end" textLength="21.5" lengthAdjust="spacingAndGlyphs">0.30</text><text x="379.5" y="419" font-size="11" fill="#000" text-anchor="end" textLength="28.2" lengthAdjust="spacingAndGlyphs">eurjpy</text><text x="440.5" y="419" font-size="11" fill="#000" text-anchor="end" textLength="33.5" lengthAdjust="spacingAndGlyphs">119.44</text><text x="501.5" y="419" font-size="11" fill="#000" text-anchor="end" textLength="21.5" lengthAdjust="spacingAndGlyphs">0.00</text><text x="562.5" y="419" font-size="11" fill="#000" text-anchor="end" textLength="21.5" lengthAdjust="spacingAndGlyphs">0.00</text><text x="623.5" y="419" font-size="11" fill="#000" text-anchor="end" textLength="33.5" lengthAdjust="spacingAndGlyphs">119.87</text><text x="684.5" y="419" font-size="11" fill="#000" text-anchor="end" textLength="21.5" lengthAdjust="spacingAndGlyphs">0.00</text><text x="745.5" y="419" font-size="11" fill="#000" text-anchor="end" textLength="21.5" lengthAdjust="spacingAndGlyphs">0.00</text><text x="813.5" y="419" font-size="11" fill="#000" text-anchor="end" textLength="15.5" lengthAdjust="spacingAndGlyphs">-43</text><rect x="14" y="425" width="996" height="1" fill="#d0d0d0"/><rect x="14" y="426" width="996" height="19" fill="#e9e9e9"/><g shape-rendering="crispEdges"><rect x="92" y="426" width="1" height="19" fill="#d0d0d0"/><rect x="228" y="426" width="1" height="19" fill="#d0d0d0"/><rect x="283" y="426" width="1" height="19" fill="#d0d0d0"/><rect x="326" y="426" width="1" height="19" fill="#d0d0d0"/><rect x="381" y="426" width="1" height="19" fill="#d0d0d0"/><rect x="442" y="426" width="1" height="19" fill="#d0d0d0"/><rect x="503" y="426" width="1" height="19" fill="#d0d0d0"/><rect x="564" y="426" width="1" height="19" fill="#d0d0d0"/><rect x="625" y="426" width="1" height="19" fill="#d0d0d0"/><rect x="686" y="426" width="1" height="19" fill="#d0d0d0"/><rect x="747" y="426" width="1" height="19" fill="#d0d0d0"/><rect x="815" y="426" width="1" height="19" fill="#d0d0d0"/></g><path d="M17.5 428.5H25.5L28.5 431.5V441.5H17.5Z" fill="url(#docg)" stroke="#505050" stroke-width="1" stroke-linejoin="round"/><path d="M25.5 428.5V431.5H28.5" fill="#fff" stroke="#505050" stroke-width="1"/><circle cx="27.6" cy="439.4" r="3.5" fill="url(#red)"/><text x="39" y="439" font-size="11" fill="#000" textLength="47.5" lengthAdjust="spacingAndGlyphs">10456417</text><text x="226.5" y="439" font-size="11" fill="#000" text-anchor="end" textLength="86.5" lengthAdjust="spacingAndGlyphs">2008.12.10 00:53</text><text x="281.5" y="439" font-size="11" fill="#000" text-anchor="end" textLength="15.5" lengthAdjust="spacingAndGlyphs">sell</text><text x="324.5" y="439" font-size="11" fill="#000" text-anchor="end" textLength="21.5" lengthAdjust="spacingAndGlyphs">0.40</text><text x="379.5" y="439" font-size="11" fill="#000" text-anchor="end" textLength="28.2" lengthAdjust="spacingAndGlyphs">eurjpy</text><text x="440.5" y="439" font-size="11" fill="#000" text-anchor="end" textLength="33.5" lengthAdjust="spacingAndGlyphs">119.26</text><text x="501.5" y="439" font-size="11" fill="#000" text-anchor="end" textLength="21.5" lengthAdjust="spacingAndGlyphs">0.00</text><text x="562.5" y="439" font-size="11" fill="#000" text-anchor="end" textLength="21.5" lengthAdjust="spacingAndGlyphs">0.00</text><text x="623.5" y="439" font-size="11" fill="#000" text-anchor="end" textLength="33.5" lengthAdjust="spacingAndGlyphs">119.87</text><text x="684.5" y="439" font-size="11" fill="#000" text-anchor="end" textLength="21.5" lengthAdjust="spacingAndGlyphs">0.00</text><text x="745.5" y="439" font-size="11" fill="#000" text-anchor="end" textLength="21.5" lengthAdjust="spacingAndGlyphs">0.00</text><text x="813.5" y="439" font-size="11" fill="#000" text-anchor="end" textLength="15.5" lengthAdjust="spacingAndGlyphs">-61</text><rect x="14" y="445" width="996" height="1" fill="#d0d0d0"/><rect x="14" y="446" width="996" height="19" fill="#f7f7f7"/><g shape-rendering="crispEdges"><rect x="92" y="446" width="1" height="19" fill="#d0d0d0"/><rect x="228" y="446" width="1" height="19" fill="#d0d0d0"/><rect x="283" y="446" width="1" height="19" fill="#d0d0d0"/><rect x="326" y="446" width="1" height="19" fill="#d0d0d0"/><rect x="381" y="446" width="1" height="19" fill="#d0d0d0"/><rect x="442" y="446" width="1" height="19" fill="#d0d0d0"/><rect x="503" y="446" width="1" height="19" fill="#d0d0d0"/><rect x="564" y="446" width="1" height="19" fill="#d0d0d0"/><rect x="625" y="446" width="1" height="19" fill="#d0d0d0"/><rect x="686" y="446" width="1" height="19" fill="#d0d0d0"/><rect x="747" y="446" width="1" height="19" fill="#d0d0d0"/><rect x="815" y="446" width="1" height="19" fill="#d0d0d0"/></g><path d="M17.5 448.5H25.5L28.5 451.5V461.5H17.5Z" fill="url(#docg)" stroke="#505050" stroke-width="1" stroke-linejoin="round"/><path d="M25.5 448.5V451.5H28.5" fill="#fff" stroke="#505050" stroke-width="1"/><circle cx="27.6" cy="459.4" r="3.5" fill="url(#red)"/><text x="39" y="459" font-size="11" fill="#000" textLength="47.5" lengthAdjust="spacingAndGlyphs">10461963</text><text x="226.5" y="459" font-size="11" fill="#000" text-anchor="end" textLength="86.5" lengthAdjust="spacingAndGlyphs">2008.12.09 21:50</text><text x="281.5" y="459" font-size="11" fill="#000" text-anchor="end" textLength="15.5" lengthAdjust="spacingAndGlyphs">sell</text><text x="324.5" y="459" font-size="11" fill="#000" text-anchor="end" textLength="21.5" lengthAdjust="spacingAndGlyphs">0.40</text><text x="379.5" y="459" font-size="11" fill="#000" text-anchor="end" textLength="28.2" lengthAdjust="spacingAndGlyphs">eurjpy</text><text x="440.5" y="459" font-size="11" fill="#000" text-anchor="end" textLength="33.5" lengthAdjust="spacingAndGlyphs">119.08</text><text x="501.5" y="459" font-size="11" fill="#000" text-anchor="end" textLength="21.5" lengthAdjust="spacingAndGlyphs">0.00</text><text x="562.5" y="459" font-size="11" fill="#000" text-anchor="end" textLength="33.5" lengthAdjust="spacingAndGlyphs">117.25</text><text x="623.5" y="459" font-size="11" fill="#000" text-anchor="end" textLength="33.5" lengthAdjust="spacingAndGlyphs">119.87</text><text x="684.5" y="459" font-size="11" fill="#000" text-anchor="end" textLength="21.5" lengthAdjust="spacingAndGlyphs">0.00</text><text x="745.5" y="459" font-size="11" fill="#000" text-anchor="end" textLength="25.5" lengthAdjust="spacingAndGlyphs">-4.02</text><text x="813.5" y="459" font-size="11" fill="#000" text-anchor="end" textLength="15.5" lengthAdjust="spacingAndGlyphs">-79</text><text x="1006.5" y="459" font-size="11" fill="#000" text-anchor="end" textLength="75.4" lengthAdjust="spacingAndGlyphs">from #10453640</text><rect x="14" y="465" width="996" height="21" fill="#c8c8c8"/><rect x="18.5" y="469.5" width="11" height="14" rx="1" fill="#9a9a9a" opacity="0.5"/><rect x="17.5" y="468.5" width="11" height="13" rx="1.5" fill="#fcfcfc" stroke="#454545"/><path d="M22 472H24V475H27L23 479.5L19 475H22Z" fill="url(#arr)"/><text x="39" y="479" font-size="11" font-weight="bold" fill="#000" textLength="606" lengthAdjust="spacingAndGlyphs" style="white-space:pre">Balance: 17 625.65  Equidad: 16 140.57  Margen: 8 400.00  Margen libre: 7 740.57  Nivel del margen: 192.15%</text><text x="759.5" y="479" font-size="11" font-weight="bold" fill="#000" textLength="53" lengthAdjust="spacingAndGlyphs">-1 485.08</text><rect x="14" y="485" width="996" height="1" fill="#d0d0d0"/><rect x="14" y="486" width="996" height="19" fill="#f7f7f7"/><g shape-rendering="crispEdges"><rect x="92" y="486" width="1" height="19" fill="#d0d0d0"/><rect x="228" y="486" width="1" height="19" fill="#d0d0d0"/><rect x="283" y="486" width="1" height="19" fill="#d0d0d0"/><rect x="326" y="486" width="1" height="19" fill="#d0d0d0"/><rect x="381" y="486" width="1" height="19" fill="#d0d0d0"/><rect x="442" y="486" width="1" height="19" fill="#d0d0d0"/><rect x="503" y="486" width="1" height="19" fill="#d0d0d0"/><rect x="564" y="486" width="1" height="19" fill="#d0d0d0"/><rect x="625" y="486" width="1" height="19" fill="#d0d0d0"/><rect x="815" y="486" width="1" height="19" fill="#d0d0d0"/></g><path d="M17.5 488.5H25.5L28.5 491.5V501.5H17.5Z" fill="url(#docg)" stroke="#505050" stroke-width="1" stroke-linejoin="round"/><path d="M25.5 488.5V491.5H28.5" fill="#fff" stroke="#505050" stroke-width="1"/><circle cx="27.6" cy="499.4" r="3.5" fill="url(#red)"/><text x="39" y="499" font-size="11" fill="#000" textLength="47.5" lengthAdjust="spacingAndGlyphs">10465778</text><text x="226.5" y="499" font-size="11" fill="#000" text-anchor="end" textLength="86.5" lengthAdjust="spacingAndGlyphs">2008.12.10 11:59</text><text x="281.5" y="499" font-size="11" fill="#000" text-anchor="end" textLength="38.0" lengthAdjust="spacingAndGlyphs">sell stop</text><text x="324.5" y="499" font-size="11" fill="#000" text-anchor="end" textLength="21.5" lengthAdjust="spacingAndGlyphs">0.20</text><text x="379.5" y="499" font-size="11" fill="#000" text-anchor="end" textLength="28.2" lengthAdjust="spacingAndGlyphs">eurjpy</text><text x="440.5" y="499" font-size="11" fill="#000" text-anchor="end" textLength="33.5" lengthAdjust="spacingAndGlyphs">119.59</text><text x="501.5" y="499" font-size="11" fill="#000" text-anchor="end" textLength="21.5" lengthAdjust="spacingAndGlyphs">0.00</text><text x="562.5" y="499" font-size="11" fill="#000" text-anchor="end" textLength="21.5" lengthAdjust="spacingAndGlyphs">0.00</text><text x="623.5" y="499" font-size="11" fill="#000" text-anchor="end" textLength="33.5" lengthAdjust="spacingAndGlyphs">119.83</text><rect x="14" y="505" width="996" height="1" fill="#316ac5"/><rect x="14" y="506" width="996" height="19" fill="#316ac5"/><g shape-rendering="crispEdges"><rect x="92" y="506" width="1" height="19" fill="#c4c4c4"/><rect x="228" y="506" width="1" height="19" fill="#c4c4c4"/><rect x="283" y="506" width="1" height="19" fill="#c4c4c4"/><rect x="326" y="506" width="1" height="19" fill="#c4c4c4"/><rect x="381" y="506" width="1" height="19" fill="#c4c4c4"/><rect x="442" y="506" width="1" height="19" fill="#c4c4c4"/><rect x="503" y="506" width="1" height="19" fill="#c4c4c4"/><rect x="564" y="506" width="1" height="19" fill="#c4c4c4"/><rect x="625" y="506" width="1" height="19" fill="#c4c4c4"/><rect x="815" y="506" width="1" height="19" fill="#c4c4c4"/></g><path d="M17.5 508.5H25.5L28.5 511.5V521.5H17.5Z" fill="url(#docg)" stroke="#505050" stroke-width="1" stroke-linejoin="round"/><path d="M25.5 508.5V511.5H28.5" fill="#fff" stroke="#505050" stroke-width="1"/><circle cx="27.6" cy="519.4" r="3.5" fill="url(#red)"/><text x="39" y="519" font-size="11" fill="#fff" textLength="47.5" lengthAdjust="spacingAndGlyphs">10465891</text><text x="226.5" y="519" font-size="11" fill="#fff" text-anchor="end" textLength="86.5" lengthAdjust="spacingAndGlyphs">2008.12.10 12:03</text><text x="281.5" y="519" font-size="11" fill="#fff" text-anchor="end" textLength="38.0" lengthAdjust="spacingAndGlyphs">sell stop</text><text x="324.5" y="519" font-size="11" fill="#fff" text-anchor="end" textLength="21.5" lengthAdjust="spacingAndGlyphs">0.40</text><text x="379.5" y="519" font-size="11" fill="#fff" text-anchor="end" textLength="28.2" lengthAdjust="spacingAndGlyphs">eurjpy</text><text x="440.5" y="519" font-size="11" fill="#fff" text-anchor="end" textLength="33.5" lengthAdjust="spacingAndGlyphs">119.32</text><text x="501.5" y="519" font-size="11" fill="#fff" text-anchor="end" textLength="21.5" lengthAdjust="spacingAndGlyphs">0.00</text><text x="562.5" y="519" font-size="11" fill="#fff" text-anchor="end" textLength="21.5" lengthAdjust="spacingAndGlyphs">0.00</text><text x="623.5" y="519" font-size="11" fill="#fff" text-anchor="end" textLength="33.5" lengthAdjust="spacingAndGlyphs">119.83</text><rect x="14" y="525" width="996" height="1" fill="#d0d0d0"/><rect x="14" y="526" width="996" height="19" fill="#f7f7f7"/><g shape-rendering="crispEdges"><rect x="92" y="526" width="1" height="19" fill="#d0d0d0"/><rect x="228" y="526" width="1" height="19" fill="#d0d0d0"/><rect x="283" y="526" width="1" height="19" fill="#d0d0d0"/><rect x="326" y="526" width="1" height="19" fill="#d0d0d0"/><rect x="381" y="526" width="1" height="19" fill="#d0d0d0"/><rect x="442" y="526" width="1" height="19" fill="#d0d0d0"/><rect x="503" y="526" width="1" height="19" fill="#d0d0d0"/><rect x="564" y="526" width="1" height="19" fill="#d0d0d0"/><rect x="625" y="526" width="1" height="19" fill="#d0d0d0"/><rect x="815" y="526" width="1" height="19" fill="#d0d0d0"/></g><path d="M17.5 528.5H25.5L28.5 531.5V541.5H17.5Z" fill="url(#docg)" stroke="#505050" stroke-width="1" stroke-linejoin="round"/><path d="M25.5 528.5V531.5H28.5" fill="#fff" stroke="#505050" stroke-width="1"/><circle cx="27.6" cy="539.4" r="3.5" fill="url(#red)"/><text x="39" y="539" font-size="11" fill="#000" textLength="47.5" lengthAdjust="spacingAndGlyphs">10465947</text><text x="226.5" y="539" font-size="11" fill="#000" text-anchor="end" textLength="86.5" lengthAdjust="spacingAndGlyphs">2008.12.10 12:04</text><text x="281.5" y="539" font-size="11" fill="#000" text-anchor="end" textLength="38.0" lengthAdjust="spacingAndGlyphs">sell stop</text><text x="324.5" y="539" font-size="11" fill="#000" text-anchor="end" textLength="21.5" lengthAdjust="spacingAndGlyphs">0.20</text><text x="379.5" y="539" font-size="11" fill="#000" text-anchor="end" textLength="28.2" lengthAdjust="spacingAndGlyphs">eurjpy</text><text x="440.5" y="539" font-size="11" fill="#000" text-anchor="end" textLength="33.5" lengthAdjust="spacingAndGlyphs">119.00</text><text x="501.5" y="539" font-size="11" fill="#000" text-anchor="end" textLength="21.5" lengthAdjust="spacingAndGlyphs">0.00</text><text x="562.5" y="539" font-size="11" fill="#000" text-anchor="end" textLength="21.5" lengthAdjust="spacingAndGlyphs">0.00</text><text x="623.5" y="539" font-size="11" fill="#000" text-anchor="end" textLength="33.5" lengthAdjust="spacingAndGlyphs">119.83</text><rect x="14" y="545" width="996" height="1" fill="#d0d0d0"/><rect x="1010" y="344" width="2" height="203" fill="#ece9d8"/></svg></body></html>
